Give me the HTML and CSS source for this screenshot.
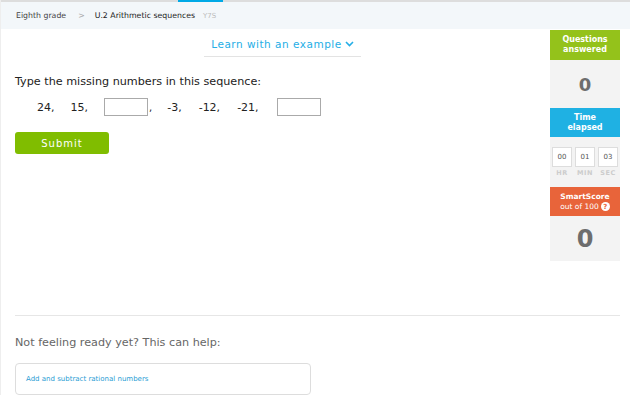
FILE: index.html
```html
<!DOCTYPE html>
<html>
<head>
<meta charset="utf-8">
<link rel="stylesheet" href="styles.css">
</head>
<body>
<div class="topline"><span class="topline-active"></span></div>
<nav class="crumbs">
  <span class="crumb">Eighth grade</span>
  <span class="sep">&gt;</span>
  <span class="crumb current">U.2 Arithmetic sequences</span>
  <span class="code">Y7S</span>
</nav>
<div class="page">
  <main class="main">
    <div class="learn-wrap">
      <a class="learn">Learn with an example
        <svg class="chev" width="9" height="6" viewBox="0 0 9 6"><path d="M1 1 L4.5 4.5 L8 1" fill="none" stroke="#25aee6" stroke-width="1.6"/></svg>
      </a>
    </div>
    <p class="prompt">Type the missing numbers in this sequence:</p>
    <div class="seq">
      <span class="num lead">24,</span>
      <span class="num lead">15,</span>
      <span class="box"></span><span class="comma">,</span>
      <span class="num">-3,</span>
      <span class="num">-12,</span>
      <span class="num wide">-21,</span>
      <span class="box"></span>
    </div>
    <button class="submit">Submit</button>
  </main>
  <aside class="side">
    <div class="head green">Questions<br>answered</div>
    <div class="val">0</div>
    <div class="head blue">Time<br>elapsed</div>
    <div class="timer">
      <div class="tcell"><span class="tbox">00</span><span class="tlab">HR</span></div>
      <div class="tcell"><span class="tbox">01</span><span class="tlab">MIN</span></div>
      <div class="tcell"><span class="tbox">03</span><span class="tlab">SEC</span></div>
    </div>
    <div class="head orange"><span class="ss">SmartScore</span><span class="oo">out of 100 <span class="q">?</span></span></div>
    <div class="val big">0</div>
  </aside>
</div>
<section class="help">
  <hr class="divider">
  <p class="help-title">Not feeling ready yet? This can help:</p>
  <div class="help-box"><a class="help-link">Add and subtract rational numbers</a></div>
</section>
</body>
</html>
```
FILE: styles.css
```css
* { box-sizing: border-box; }
body {
  margin: 0;
  font-family: "DejaVu Sans", Verdana, sans-serif;
  background: #fff;
  color: #222;
  border-left: 1px solid #eee;
}
.topline {
  height: 2px;
  background: #ddd;
  position: relative;
}
.topline-active {
  position: absolute;
  left: 177px;
  width: 45px;
  top: 0;
  height: 2px;
  background: #00a9e6;
}
.crumbs {
  height: 27px;
  background: #f3f7fa;
  display: flex;
  align-items: center;
  padding-left: 15px;
  font-size: 7.8px;
  color: #444;
}
.sep { color: #aaa; margin: 0 10px 0 12px; }
.crumb.current { color: #222; }
.code { color: #bbb; margin-left: 8px; font-size: 7px; }
.page {
  display: flex;
  padding-right: 10px;
}
.main {
  flex: 1;
  padding-left: 14px;
}
.learn-wrap {
  display: flex;
  justify-content: center;
  padding-top: 9px;
}
.learn {
  color: #25aee6;
  font-size: 10.5px;
  letter-spacing: 0.5px;
  padding: 0 7px 6px;
  border-bottom: 1px solid #e3e3e3;
  display: flex;
  align-items: center;
  gap: 3px;
}
.prompt {
  margin: 18px 0 0;
  font-size: 11.2px;
  color: #222;
}
.seq {
  display: flex;
  align-items: center;
  margin-top: 10px;
  padding-left: 22px;
  font-size: 11px;
}
.num { margin-right: 17px; }
.num.lead { margin-right: 16px; }
.num.wide { margin-right: 18px; }
.box {
  width: 44px;
  height: 18px;
  border: 1px solid #aaa;
  background: #fff;
}
.comma { margin: 0 15px 0 1px; font-size: 10px; }
.submit {
  margin-top: 16px;
  width: 94px;
  height: 22px;
  background: #80bd00;
  border: none;
  border-radius: 3px;
  color: #fff;
  font-family: "DejaVu Sans", Verdana, sans-serif;
  font-size: 10px;
  letter-spacing: 1px;
  padding: 0;
}
.side {
  width: 70px;
  margin-top: 1px;
  background: #f3f3f3;
  display: flex;
  flex-direction: column;
}
.head {
  color: #fff;
  font-size: 8px;
  font-weight: bold;
  text-align: center;
  line-height: 10px;
  height: 29px;
  display: flex;
  flex-direction: column;
  align-items: center;
  justify-content: center;
}
.green { background: #94c21b; height: 30px; }
.blue { background: #1fb1e3; }
.orange { background: #e8643a; font-size: 7.5px; }
.orange .oo { font-weight: normal; display: flex; align-items: center; gap: 2px; }
.val {
  height: 48px;
  display: flex;
  align-items: center;
  justify-content: center;
  font-size: 18px;
  font-weight: bold;
  color: #6d6d6d;
}
.val.big { font-size: 24px; height: 45px; }
.timer {
  display: flex;
  justify-content: center;
  gap: 3px;
  padding: 10px 0 10px;
}
.tcell {
  display: flex;
  flex-direction: column;
  align-items: center;
}
.tbox {
  width: 20px;
  height: 20px;
  background: #fff;
  border: 1px solid #ddd;
  font-size: 7px;
  color: #555;
  display: flex;
  align-items: center;
  justify-content: center;
}
.tlab {
  font-size: 6.5px;
  font-weight: bold;
  color: #ccc;
  margin-top: 2px;
  letter-spacing: 0.5px;
}
.q {
  display: inline-flex;
  width: 9px;
  height: 9px;
  border-radius: 50%;
  background: #fff;
  color: #e8643a;
  font-size: 7px;
  font-weight: bold;
  align-items: center;
  justify-content: center;
}
.help {
  padding: 0 10px 0 14px;
}
.divider {
  border: none;
  border-top: 1px solid #e6e6e6;
  margin: 54px 0 0;
}
.help-title {
  margin: 20px 0 0;
  font-size: 11.2px;
  color: #666;
}
.help-box {
  margin-top: 14px;
  width: 296px;
  height: 32px;
  border: 1px solid #ddd;
  border-radius: 4px;
  display: flex;
  align-items: center;
  padding-left: 10px;
}
.help-link {
  color: #2a9dd4;
  font-size: 7px;
}
```
